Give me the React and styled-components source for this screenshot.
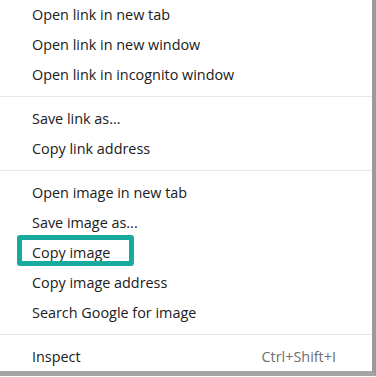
import React from "react";
import styled, { createGlobalStyle } from "styled-components";

const Global = createGlobalStyle`
  html, body {
    margin: 0;
    padding: 0;
    background: #fff;
  }
`;

const Menu = styled.div`
  width: 372px;
  height: 371px;
  background: #fff;
  border-right: 4px solid #9a9a9a;
  border-bottom: 5px solid #a5a5a5;
  box-sizing: content-box;
  font-family: "Open Sans", "Noto Sans", sans-serif;
  font-size: 14.4px;
  color: #202020;
  display: flex;
  flex-direction: column;
`;

const Item = styled.div`
  position: relative;
  height: 30px;
  display: flex;
  align-items: center;
  justify-content: space-between;
  padding: 0 36px 0 32px;
`;

const Shortcut = styled.span`
  color: #6e6e6e;
`;

const Separator = styled.div`
  height: 14px;
  display: flex;
  align-items: center;

  &::after {
    content: "";
    flex: 1;
    height: 1px;
    background: #e6e6e6;
  }
`;

const Highlight = styled.span`
  position: absolute;
  left: 17px;
  top: -2px;
  width: 117px;
  height: 31px;
  box-sizing: border-box;
  border: 5px solid #17ab9f;
  border-radius: 3px;
`;

const groups = [
  ["Open link in new tab", "Open link in new window", "Open link in incognito window"],
  ["Save link as...", "Copy link address"],
  [
    "Open image in new tab",
    "Save image as...",
    "Copy image",
    "Copy image address",
    "Search Google for image",
  ],
];

export default function App() {
  return (
    <>
      <Global />
      <Menu>
        {groups.map((group, i) => (
          <React.Fragment key={i}>
            {group.map(label => (
              <Item key={label}>
                {label}
                {label === "Copy image" && <Highlight />}
              </Item>
            ))}
            <Separator />
          </React.Fragment>
        ))}
        <Item>
          Inspect
          <Shortcut>Ctrl+Shift+I</Shortcut>
        </Item>
      </Menu>
    </>
  );
}
